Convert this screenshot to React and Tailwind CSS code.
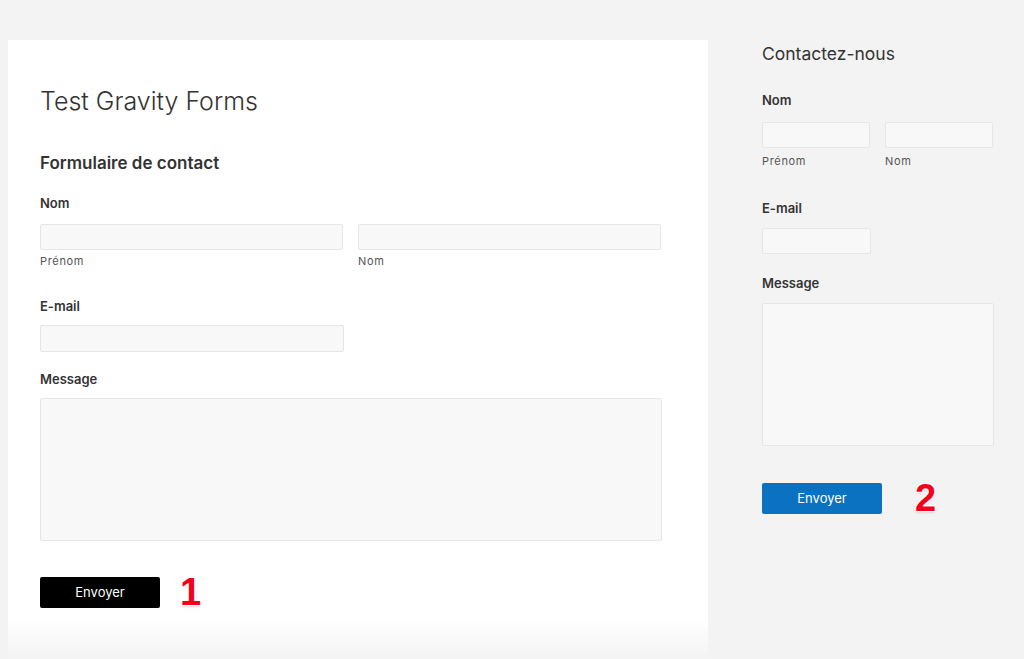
const font = { fontFamily: "Inter, 'Noto Sans', 'Liberation Sans', sans-serif" };

const inputCls =
  "block h-[26px] rounded-[2px] border border-[#e6e6e6] bg-[#f8f8f8]";

const Label = ({ children, className = "" }) => (
  <p className={`text-[13px] font-semibold leading-[18px] text-[#333] ${className}`}>{children}</p>
);

const SubLabel = ({ children, className = "mt-1" }) => (
  <span className={`block text-[11px] leading-[14px] tracking-[0.06em] text-[#555] ${className}`}>{children}</span>
);

// red step number with a white outline
const Marker = ({ children }) => (
  <span
    className="text-[38px] font-bold leading-[31px] text-[#f5001a] [text-shadow:1px_0_0_#fff,-1px_0_0_#fff,0_1px_0_#fff,0_-1px_0_#fff,1px_1px_0_#fff,-1px_-1px_0_#fff,1px_-1px_0_#fff,-1px_1px_0_#fff,0_1px_3px_rgba(0,0,0,0.25)]"
    style={{ fontFamily: "'Liberation Sans', Arial, sans-serif" }}
  >
    {children}
  </span>
);

const MainForm = () => (
  <section className="ml-2 w-[700px] shrink-0 bg-[linear-gradient(to_bottom,#ffffff_calc(100%-40px),#f3f3f3)] pl-8 pt-[45px]">
    <h1 className="text-[25px] font-light leading-[32px] text-[#333]">Test Gravity Forms</h1>
    <h2 className="mt-[35px] text-[17px] font-semibold leading-[22px] text-[#333]">Formulaire de contact</h2>

    <Label className="mt-5">Nom</Label>
    <div className="mt-3 flex gap-[15px]">
      <label>
        <span className={`${inputCls} w-[303px]`} />
        <SubLabel>Prénom</SubLabel>
      </label>
      <label>
        <span className={`${inputCls} w-[303px]`} />
        <SubLabel>Nom</SubLabel>
      </label>
    </div>

    <Label className="mt-[29px]">E-mail</Label>
    <span className={`${inputCls} mt-[10px] h-[27px] w-[304px]`} />

    <Label className="mt-[18px]">Message</Label>
    <span className={`${inputCls} mt-[10px] h-[143px] w-[622px]`} />

    <div className="mt-9 flex h-[31px] items-center gap-5">
      <button className="h-[31px] w-[120px] rounded-[2px] bg-black text-[13px] text-white">Envoyer</button>
      <Marker>1</Marker>
    </div>
  </section>
);

const Sidebar = () => (
  <aside className="ml-[54px] w-[232px] shrink-0 pt-[2px]">
    <h3 className="text-[17.5px] leading-[24px] text-[#333]">Contactez-nous</h3>

    <Label className="mt-[25px]">Nom</Label>
    <div className="mt-[13px] flex gap-[15px]">
      <label>
        <span className={`${inputCls} w-[108px]`} />
        <SubLabel className="mt-[6px]">Prénom</SubLabel>
      </label>
      <label>
        <span className={`${inputCls} w-[108px]`} />
        <SubLabel className="mt-[6px]">Nom</SubLabel>
      </label>
    </div>

    <Label className="mt-[31px]">E-mail</Label>
    <span className={`${inputCls} mt-[11px] w-[109px]`} />

    <Label className="mt-5">Message</Label>
    <span className={`${inputCls} mt-[11px] h-[143px] w-[232px]`} />

    <div className="mt-[37px] flex h-[31px] items-center gap-[33px]">
      <button className="h-[31px] w-[120px] shrink-0 rounded-[2px] bg-[#0b72c1] text-[13px] text-white">Envoyer</button>
      <Marker>2</Marker>
    </div>
  </aside>
);

export default function App() {
  return (
    <div className="flex h-[659px] overflow-hidden bg-[#f3f3f3] pt-10" style={font}>
      <MainForm />
      <Sidebar />
    </div>
  );
}
